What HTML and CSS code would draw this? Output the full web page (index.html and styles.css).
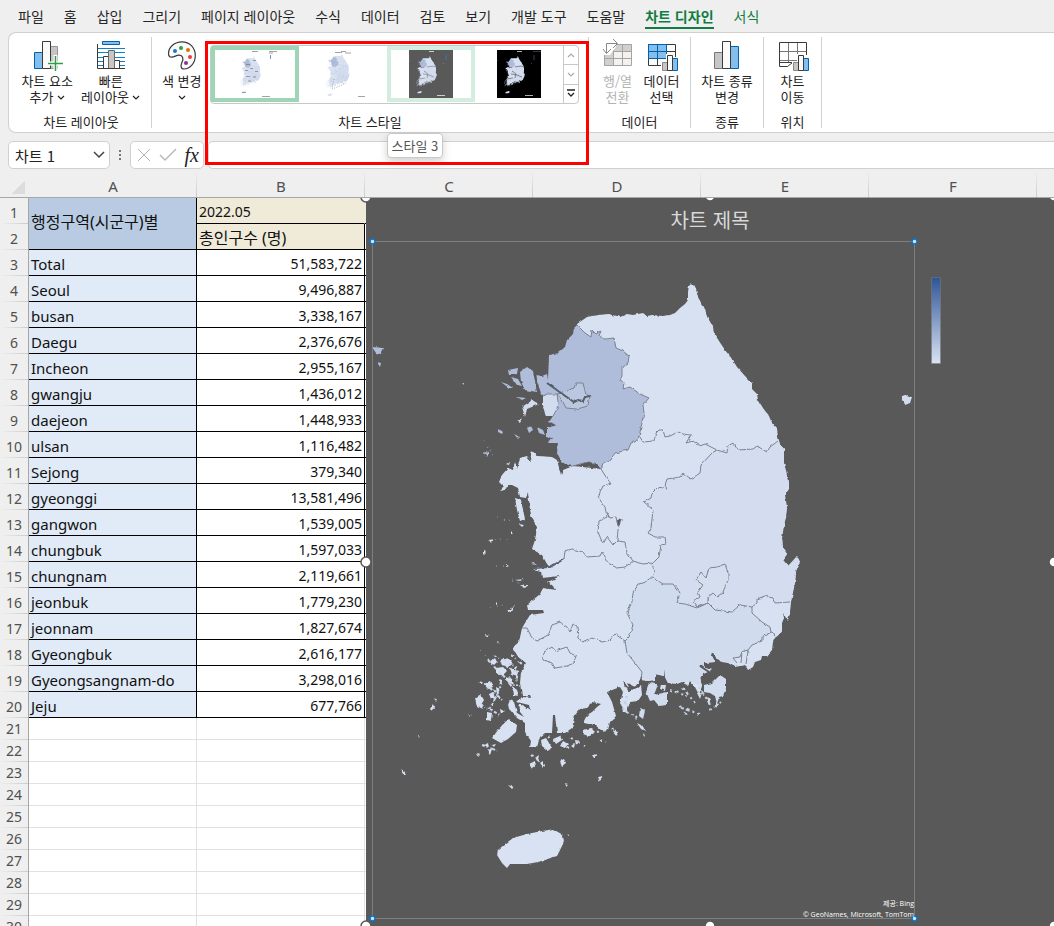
FILE: index.html
```html
<!DOCTYPE html>
<html lang="ko">
<head>
    <meta charset="UTF-8">
    <meta name="viewport" content="width=device-width, initial-scale=1.0">
    <title>차트 디자인</title>
    <link rel="stylesheet" href="styles.css">
</head>
<body>
    <!-- shared drawings -->
    <svg class="defs" width="0" height="0" aria-hidden="true">
        <defs>
            <filter id="rough" x="0" y="0" width="1" height="1" color-interpolation-filters="sRGB">
                <feTurbulence type="fractalNoise" baseFrequency="0.2" numOctaves="2" seed="4" result="noise"/>
                <feDisplacementMap in="SourceGraphic" in2="noise" scale="3" xChannelSelector="R" yChannelSelector="G"/>
            </filter>
            <symbol id="down" viewBox="0 0 8 5"><path d="M1 1l3 3 3-3" fill="none" stroke="currentColor" stroke-width="1.2"/></symbol>
            <symbol id="map" viewBox="366 198 688 728">
                <!-- mainland -->
                <path fill="#d8e1f2" d="M577 324L587 317 592 316 598 315 609 314 617 316 620 317 627 314 633 315 643 313 647 316 652 315 663 316 670 315 675 313 680 308 685 304 688 300 688 292 689 285 691 283 696 288 697 295 700 301 704 307 708 318 713 327 714 333 719 341 725 350 732 359 737 367 745 376 752 383 752 389 757 394 758 400 763 408 769 416 771 421 777 428 778 437 780 444 784 449 784 463 785 472 789 482 789 489 785 495 784 500 787 507 786 518 783 527 782 538 783 548 787 554 783 560 788 566 793 562 797 556 800 562 796 571 795 583 792 597 791 602 790 613 788 621 786 618 783 613 784 618 782 623 782 630 781 633 775 638 773 642 772 650 767 656 762 656 761 660 755 662 753 667 748 670 745 665 735 667 728 663 722 662 717 660 713 651 711 654 715 662 703 663 705 668 712 670 703 674 700 678 702 686 699 695 695 687 690 681 688 685 682 682 677 684 668 683 665 677 666 667 663 668 664 676 655 674 655 680 648 681 640 680 635 687 627 683 630 690 641 685 642 695 638 701 630 702 627 711 624 711 620 703 623 692 620 687 607 692 612 702 616 716 610 722 608 730 601 730 595 725 583 723 587 715 592 712 597 707 601 704 593 702 587 708 580 709 575 715 572 728 565 733 557 733 555 715 553 715 552 733 545 733 540 737 537 747 530 747 531 741 525 732 525 723 517 718 510 710 508 705 510 700 514 702 517 713 524 717 520 712 518 705 522 705 530 710 529 705 517 702 522 697 531 698 530 696 522 696 520 683 521 672 526 663 518 657 512 648 519 642 522 628 525 623 530 615 544 613 543 610 528 610 527 605 533 600 540 594 543 588 555 590 553 586 548 582 560 576 542 578 541 571 533 569 550 567 547 564 542 555 532 549 535 540 537 527 532 518 530 510 528 492 526 498 520 497 518 488 512 485 508 485 505 490 500 491 504 487 499 482 502 475 508 468 513 470 515 462 517 469 520 458 527 456 532 462 530 453 532 451 538 456 552 457 557 460 561 475 563 470 573 466 601 469z"/>
                <!-- Gyeonggi -->
                <path fill="#afbddb" d="M577 325L585 333 591 337 592 330 596 334 601 331 599 336 605 339 614 338 616 348 623 351 629 356 628 363 622 367 622 376 620 380 624 382 623 389 630 387 640 394 649 398 643 405 644 413 642 422 639 437 635 442 631 443 628 450 615 453 610 460 603 463 601 469 595 463 587 462 573 466 567 465 562 462 557 453 558 443 548 443 552 438 547 437 547 428 557 425 549 422 553 416 546 416 542 405 543 397 538 390 536 375 542 376 547 374 548 380 549 355 558 353 565 347 567 340 573 334 574 328z"/>
                <path fill="#d2dcee" d="M542 396L547 394 557 394 558 402 557 409 553 416 546 416 542 405z"/>
                <!-- Gyeongbuk -->
                <path fill="#d3ddef" d="M717 450L727 453 728 446 733 443 738 450 753 449 757 446 767 452 770 447 778 441 784 449 784 463 789 482 785 495 787 507 782 538 783 548 787 554 783 560 788 566 797 556 800 562 796 571 795 583 790 602 775 603 773 598 765 596 757 599 757 603 752 607 740 605 732 612 715 610 708 603 697 608 685 604 677 603 680 593 673 584 663 584 652 577 654 572 652 564 659 557 661 545 666 544 665 537 655 537 648 533 651 528 653 510 644 502 651 498 652 493 658 487 667 489 665 485 667 479 680 477 683 473 691 479 700 473 701 465 712 453z"/>
                <!-- Gyeongnam -->
                <path fill="#d0dbee" d="M652 577L663 584 673 584 680 593 677 603 697 608 708 603 715 610 732 612 740 605 752 607 752 613 762 622 770 628 771 632 762 636 762 641 752 645 748 650 742 652 740 657 733 658 737 665 722 661 717 659 713 651 711 654 715 662 703 663 705 668 712 670 703 674 700 678 702 686 690 681 682 682 668 683 665 677 664 669 664 676 655 674 655 680 642 679 642 672 635 663 627 653 625 641 629 637 633 625 627 613 632 602 633 592 639 584z"/>
                <!-- region borders -->
                <g fill="none" stroke="#7b838f" stroke-width="1">
                    <path d="M577 325L585 333 591 337 592 330 596 334 601 331 599 336 605 339 614 338 616 348 623 351 629 356 628 363 622 367 622 376 620 380 624 382 623 389 630 387 640 394 649 398 643 405 644 413 642 422 639 437 635 442 631 443 628 450 615 453 610 460 603 463 601 469 595 463 587 462 573 466"/>
                    <path d="M640 437L643 442 654 441 656 433 659 430 663 430 665 437 670 436 678 432 683 434 691 435 686 443 693 441 700 446 705 444 717 450 727 453 728 446 733 443 738 450 753 449 757 446 767 452 770 447 778 441"/>
                    <path d="M717 450L712 453 701 465 700 473 691 479 683 473 680 477 667 479 665 485 667 489 658 487 652 493 651 498 644 502 653 510 651 528 648 533 655 537 665 537 666 544 661 545 659 557 652 564 654 572 652 577 663 584 673 584 680 593 677 603 685 604 697 608 708 603"/>
                    <path d="M708 597L708 603 715 610 732 612 740 605 752 607 757 603 757 599 765 596 773 598 775 603 790 602M752 607V613L762 622 770 627 771 632 774 633 775 638M771 632L767 635 762 636 762 641 752 645 748 650 742 652 740 657 733 658 737 663M748 650L746 664M742 652L741 663"/>
                    <path fill="#d5deef" d="M708 603L697 607 693 602 700 597 698 592 703 585 696 580 701 572 706 578 709 568 717 567 725 564 728 573 728 580 723 592 717 597 713 593 708 597z"/>
                    <path d="M652 577L645 582 639 584 633 592 632 602 627 613 633 625 629 637 625 641 627 653 635 663 642 672 641 679"/>
                    <path d="M601 469L606 477 611 484 603 486 598 497 605 507 607 517 599 521 598 532 603 544 607 537 613 545 617 541 618 530 621 519 618 527 616 517 610 518 607 513M617 541L625 542 627 553 633 561 643 564 652 563"/>
                    <path d="M550 567L564 559 565 551 572 549 583 552 587 557 600 556 602 552 608 563 617 568 625 567 633 561"/>
                    <path d="M522 628L527 628 532 638 537 641 548 635 552 625 560 622 567 627 570 632 573 624 577 626 578 638 583 642 592 638 602 642 610 640 615 634 625 641"/>
                    <path d="M543 660L544 652 552 647 555 651 567 647 570 653 576 656 574 663 567 666 555 668 552 663z"/>
                    <path fill="#bac7e1" d="M567 391L574 388 576 383 583 383 586 395 590 396 588 406 577 409 566 408 562 400 557 394 563 393"/>
                    <path d="M542 396L547 394 557 394 558 402 557 409 553 416"/>
                    <path stroke="#5a5e68" stroke-width="2" d="M547 383L561 393 574 402 578 400 583 401 585 397 590 396M532 568L550 567 564 559"/>
                    <path stroke="#595959" stroke-width="2" d="M618 520l1 6M620 519l-2 4"/>
                </g>
                <!-- channel between Ganghwa and Gimpo -->
                <path fill="none" stroke="#595959" stroke-width="2" d="M535 371L536 382 540 393"/>
                <!-- north-west islands -->
                <path fill="#afbddb" d="M520 372L527 367 533 371 537 392 525 390 521 382zM508 370L518 368 517 374 509 375zM511 377L518 379 522 386 517 385zM501 382l6 2 6 4-4 0zM527 428l4-2 2 4-4 3zM537 427l6 3 2 5-6-2zM498 428l5 4-1 2-4-2zM372 347l12 1-3 6-5-1zM377 362l4 1-1 4zM529 433l3 1M514 434l6 3-2 2zM517 397l9 1-4 2zM484 452l5 1-2 4zM463 383l2 0 0 2z"/>
                <path fill="#d2dcee" d="M522 407L532 400 539 404 527 409 525 417zM902 397l6-2 4 2-2 6-5 2zM517 421l5-2-2 4z"/>
                <!-- west coast islands -->
                <path fill="#d8e1f2" d="M515 498L521 500 525 519 520 521 517 510zM519 524l5 1-2 2zM489 540l5-1-3 4zM511 531l3 3-3 0zM484 551l2 1-2 2zM506 565l2 1-2 1zM515 580l9-1-4 2zM520 585l8 0-3 3zM496 602l2 2-2 1zM507 611l7-5-2 5-4 1zM506 464l4-2-1 3zM531 564l3-1 3 2z"/>
                <path fill="none" stroke="#99a3b3" stroke-dasharray="1 6 1 4" d="M484 440l9 16-4-12M488 541l20-3M497 518l16 3M512 580l15 6M496 566h12M490 608l17-4M480 650l12 12"/>
                <!-- south-west islands -->
                <path fill="#d8e1f2" d="M490 662l5-4 2 4-4 4zM500 661l8-3 5 5-6 3-5-1zM496 668l7-1 4 4-5 5-5-3zM510 668l8 3-1 5-5-2zM506 677l6 2 2 6-6-3zM484 684l6-3 3 6-5 2zM475 699l6-4 3 5-3 5 2 4-6-3zM489 694l4-2 2 6-4 1zM496 687l4 2-3 6zM512 686l5 4 2 6-5-1zM487 712l5 1-1 7-4-1zM500 709l4 2-3 3zM492 738L498 730 504 723 509 719 517 725 516 732 508 739 501 743zM494 747l-2-2 4-1zM484 745l4-2 1 5zM487 751l5-2-2 6zM476 753l4 1-2 2zM430 709l4-6 1 4-3 5zM434 698l3 2-1 2zM401 769l3 2 2 3-2 0zM418 735l2 1-1 2zM468 714l4 1-2 1zM485 634l4 1-3 2zM497 641l2 1-1 2z"/>
                <path fill="none" stroke="#cdd7e8" stroke-width="2" stroke-dasharray="3 2 1 3 5 2" d="M488 660l14 15-2 13M494 655l22 12-8 15M503 675l13 17M480 682l18 11-9 17M490 688l12 12M506 666l11 6 0 14M480 704l20 11M482 745l16 6M511 655l11 9"/>
                <!-- south islands -->
                <path fill="#d8e1f2" d="M541 740l5-2 6 10-5 2-5-4zM529 764l6-3 1 5-4 3zM535 758l4-3-1 5zM540 763l3-2 0 6zM560 761l4-2 2 4-4 3zM553 739l7-3 2 4-6 4zM563 741l5 3-3 4-5-2zM571 746l4-3-1 5zM575 740l5 3-4 2zM583 730l8-2 4 4-7 4-5-2zM592 755l5-1-3 4zM598 777l5-1-3 5zM565 783l3 1-2 2zM508 785l6 2-2 2zM612 730l6 2-1 4zM568 834l1 2-2 0z"/>
                <path fill="none" stroke="#cdd7e8" stroke-width="2" stroke-dasharray="2 4 4 5" d="M532 755l14 12M548 737l21 11M571 738l14 8M597 732l20-4M600 740l6 2"/>
                <path fill="#d1dcee" d="M648 685l5-4 4 6-3 8 13-3 0 13-8 1-5-6-4 1-4-9zM661 684l5 1-1 6-5-2zM640 709l5 2-2 8-4-3zM637 723l6 3 2 5-4-2zM704 685l8-2 8-8 6 4 0 9-3 8-4 1-2 7-2-8-5-3-6-1zM697 693l5 0-2 6zM706 697l5 2-3 4zM683 711l5 3-2 1zM678 705l4 1-2 2zM716 702l3 2-3 4zM644 733l1 4-2-2z"/>
                <path fill="none" stroke="#c5d0e2" stroke-width="2" stroke-dasharray="2 3 4 3" d="M683 688l12 15M699 687l11 17M670 690l17 6M681 708l19 6M627 696l-4 14 14 8M710 710l11-8"/>
                <!-- inlets on the south coast -->
                <path fill="none" stroke="#595959" stroke-width="2" d="M623 682l6 8 10-4 3-9M657 676l4 8 7 0M700 666l9 6M681 686l8 0M514 652l6 10"/>
                <path fill="#d9e2f3" d="M497 855L498 850 505 844 513 838 527 834 542 831 553 829 563 835 564 842 557 856 538 862 527 864 510 864 507 868 502 863z"/>
            </symbol>
        </defs>
    </svg>

    <nav class="tabs">
        <a href="#">파일</a>
        <a href="#">홈</a>
        <a href="#">삽입</a>
        <a href="#">그리기</a>
        <a href="#">페이지 레이아웃</a>
        <a href="#">수식</a>
        <a href="#">데이터</a>
        <a href="#">검토</a>
        <a href="#">보기</a>
        <a href="#">개발 도구</a>
        <a href="#">도움말</a>
        <a href="#" class="active">차트 디자인</a>
        <a href="#" class="context">서식</a>
    </nav>

    <div class="ribbon">
        <div class="group group-layout">
            <div class="tools">
                <button class="tool">
                    <svg class="icon" viewBox="0 0 30 30"><path fill="#83beec" stroke="#0063b1" d="M2.500 11.500h8v16h-8z"/><path fill="#c8c6c4" stroke="#979593" d="M18.500 5.500h7v22h-7z"/><path fill="#fafafa" stroke="#3b3a39" d="M10.500.500h8v27h-8z"/><path stroke="#fff" stroke-width="4" d="M23.500 14v15M16 22.500h15"/><path stroke="#2f9e44" stroke-width="1.500" d="M23.500 15v15M16 22.500h15"/></svg>
                    <span>차트 요소</span>
                    <span>추가 <svg class="down"><use href="#down"/></svg></span>
                </button>
                <button class="tool">
                    <svg class="icon" viewBox="0 0 30 30"><path stroke="#0f7fc9" d="M2 7.500h27M2 11.500h27M2 16.500h27M2 20.500h27M2 24.500h27"/><path fill="#83beec" stroke="#0063b1" d="M6.500.500h17v3h-17z"/><path fill="#fafafa" stroke="#3b3a39" d="M7.500 15.500h5v12h-5zM18.500 19.500h5v8h-5z"/><path fill="#c8c6c4" stroke="#6b6967" d="M12.500 9.500h6v18h-6z"/><path fill="none" stroke="#3b3a39" d="M1.500 3v24.500H29"/></svg>
                    <span>빠른</span>
                    <span>레이아웃 <svg class="down"><use href="#down"/></svg></span>
                </button>
            </div>
            <h2>차트 레이아웃</h2>
        </div>

        <div class="group group-style">
            <div class="tools">
                <button class="tool">
                    <svg class="icon" viewBox="0 0 30 30"><path fill="#fafafa" stroke="#3b3a39" stroke-width="1.200" d="M15 .8C7.500.8 1.500 6 1.500 12.500c0 2.500 1.300 3.700 3.200 3.700 3 0 4.500-2.200 7.300-2 4 .3 4.800 3.300 3 7-1.500 3.300-1.500 6.800 2 6.800 6 0 11.300-6 11.300-13.300C28.300 6.500 22.500.8 15 .8z"/><circle cx="8" cy="10" r="2" fill="#1979ca"/><circle cx="14" cy="7" r="2" fill="#2f9e44"/><circle cx="21" cy="9" r="2" fill="#e07000"/><circle cx="23" cy="16" r="2" fill="#e83b40"/><circle cx="19" cy="22" r="2" fill="#8c2fa0"/></svg>
                    <span>색 변경</span>
                    <span><svg class="down"><use href="#down"/></svg></span>
                </button>
                <div class="gallery">
                    <button class="style selected" aria-label="스타일 1"><svg class="thumb" viewBox="0 0 44 48"><use href="#map" width="44" height="48"/><path stroke="#666" stroke-width=".6" d="M19 1.500h6M36 1.500h8M36 3h4M29 46.500h8M13 14.500h4M20 10.500h3M12 20.500h3M17 18.500h3M22 21.500h3M13 26.500h4M15 31h3M20 27h3M9 42.500h4"/><path stroke="#7d96c7" d="M37.500 5v4"/></svg></button>
                    <button class="style" aria-label="스타일 2"><svg class="thumb" viewBox="0 0 44 48"><use href="#map" x="-3" y="-3" width="50" height="54"/><path stroke="#666" stroke-width=".6" d="M14 2.500h7M20 1.500h5M24 3h6M37 46.500h7"/><path fill="none" stroke="#999" stroke-width=".8" stroke-dasharray="1 1.500" d="M13 29l-2 10 8-3 6-3"/></svg></button>
                    <button class="style hover" aria-label="스타일 3"><svg class="thumb gray" viewBox="0 0 44 48"><use href="#map" width="44" height="48"/><path fill="none" stroke="#666" stroke-width=".5" d="M18 17l6-1 3 1M15 21l4 3-1 4M14 24l6 1 5 2M10 29l6-1"/><path stroke="#eee" stroke-width=".8" d="M20 1.500h5M28 45.500h8"/><path stroke="#4d71b2" d="M37 5v5"/></svg><span class="tooltip">스타일 3</span></button>
                    <button class="style" aria-label="스타일 4"><svg class="thumb black" viewBox="0 0 44 48"><use href="#map" width="44" height="48"/><path fill="none" stroke="#333" stroke-width=".5" d="M18 17l6-1 3 1M15 21l4 3-1 4M14 24l6 1 5 2M10 29l6-1"/><path stroke="#ddd" stroke-width=".8" d="M20 1.500h5M28 45.500h8"/><path stroke="#444" stroke-width=".8" d="M36 1.500h8"/><path stroke="#29406f" d="M37 5v5"/></svg></button>
                    <div class="scroll">
                        <button aria-label="위로" disabled><svg class="down up"><use href="#down"/></svg></button>
                        <button aria-label="아래로" disabled><svg class="down"><use href="#down"/></svg></button>
                        <button aria-label="자세히"><svg width="8" height="9" viewBox="0 0 8 9"><path d="M0 1h8M1 4l3 3 3-3" fill="none" stroke="#222" stroke-width="1.300"/></svg></button>
                    </div>
                </div>
            </div>
            <h2>차트 스타일</h2>
            <div class="mark"></div>
        </div>

        <div class="group group-data">
            <div class="tools">
                <button class="tool" disabled>
                    <svg class="icon" viewBox="0 0 30 30"><path fill="#f3f2f1" stroke="#a6a4a2" d="M1.500 3.500h27v21h-27z"/><path fill="#d2d0ce" stroke="#a6a4a2" d="M10.500 3.500h18v7h-18zM1.500 10.500h9v14h-9z"/><path fill="none" stroke="#a6a4a2" d="M1 17.500h27M10.500 4v21M19.500 4v21"/><path fill="#fff" d="M0-2h13v8L7 14H0z"/><path fill="none" stroke="#8a8886" d="M3.500 12V2.500H14M0 8l3.500 4.500L8 8M10-2l4.500 4.500L10 7"/></svg>
                    <span>행/열</span>
                    <span>전환</span>
                </button>
                <button class="tool">
                    <svg class="icon" viewBox="0 0 30 30"><path fill="#fafafa" stroke="#3b3a39" d="M1.500 3.500h27v21h-27zM2 17.500h27M10.500 17v7M19.500 3v21M19 10.500h9"/><path fill="#83beec" stroke="#0063b1" d="M1.500 3.500h18v14h-18zM1 10.500h18M10.500 3v14"/><path fill="#fff" d="M14 19h5v-6h7v3h5v14H14z"/><path fill="#c8c6c4" stroke="#8a8886" d="M15.500 21.500h5v8h-5z"/><path fill="#83beec" stroke="#0063b1" d="M25.500 17.500h5v12h-5z"/><path fill="#fafafa" stroke="#3b3a39" d="M20.500 14.500h5v15h-5z"/></svg>
                    <span>데이터</span>
                    <span>선택</span>
                </button>
            </div>
            <h2>데이터</h2>
        </div>

        <div class="group group-type">
            <div class="tools">
                <button class="tool">
                    <svg class="icon" viewBox="0 0 30 30"><path fill="#c8c6c4" stroke="#797775" d="M2.500 11.500h8v16h-8z"/><path fill="#83beec" stroke="#0063b1" d="M18.500 5.500h8v22h-8z"/><path fill="#fafafa" stroke="#3b3a39" d="M10.500.500h8v27h-8z"/></svg>
                    <span>차트 종류</span>
                    <span>변경</span>
                </button>
            </div>
            <h2>종류</h2>
        </div>

        <div class="group group-place">
            <div class="tools">
                <button class="tool">
                    <svg class="icon" viewBox="0 0 30 30"><path fill="#fafafa" stroke="#797775" d="M1.500 10.500h27M1.500 19.500h27M10.500 1v20M19.500 1v20"/><path fill="none" stroke="#3b3a39" d="M28.500 14V1.500h-27v24h8l5-4h-13"/><path fill="#fff" d="M14 20h5v-7h7v3h5v14H14z"/><path fill="#c8c6c4" stroke="#8a8886" d="M15.500 21.500h5v8h-5z"/><path fill="#83beec" stroke="#0063b1" d="M25.500 17.500h5v12h-5z"/><path fill="#fafafa" stroke="#3b3a39" d="M20.500 14.500h5v15h-5z"/></svg>
                    <span>차트</span>
                    <span>이동</span>
                </button>
            </div>
            <h2>위치</h2>
        </div>
    </div>

    <div class="formula-bar">
        <div class="name-box">
            <input type="text" value="차트 1" aria-label="이름 상자">
            <button aria-label="이름 목록"><svg width="12" height="8" viewBox="0 0 12 8"><path d="M1 1l5 5 5-5" fill="none" stroke="#444" stroke-width="1.500"/></svg></button>
        </div>
        <svg class="dots" width="4" height="14" viewBox="0 0 4 14"><path fill="#777" d="M1 2h2v2H1zM1 6h2v2H1zM1 10h2v2H1z"/></svg>
        <div class="fx-box">
            <button aria-label="취소"><svg width="14" height="14" viewBox="0 0 14 14"><path d="M1 1l12 12M13 1L1 13" stroke="#b5b5b5"/></svg></button>
            <button aria-label="입력"><svg width="18" height="14" viewBox="0 0 18 14"><path d="M1 7l5 5L17 1" fill="none" stroke="#b5b5b5" stroke-width="1.300"/></svg></button>
            <button class="fx" aria-label="함수 삽입"><i>fx</i></button>
        </div>
        <input class="formula" type="text" aria-label="수식 입력줄">
    </div>

    <main class="sheet">
        <table>
            <colgroup><col class="col-head"><col><col><col><col><col><col><col></colgroup>
            <thead>
                <tr><th class="corner"></th><th>A</th><th>B</th><th>C</th><th>D</th><th>E</th><th>F</th><th></th></tr>
            </thead>
            <tbody class="data">
                <tr><th>1</th><td class="region" rowspan="2">행정구역(시군구)별</td><td class="period">2022.05</td><td colspan="5" class="first"></td></tr>
                <tr><th>2</th><td class="measure">총인구수 (명)</td><td colspan="5"></td></tr>
                <tr><th>3</th><td>Total</td><td>51,583,722</td><td colspan="5"></td></tr>
                <tr><th>4</th><td>Seoul</td><td>9,496,887</td><td colspan="5"></td></tr>
                <tr><th>5</th><td>busan</td><td>3,338,167</td><td colspan="5"></td></tr>
                <tr><th>6</th><td>Daegu</td><td>2,376,676</td><td colspan="5"></td></tr>
                <tr><th>7</th><td>Incheon</td><td>2,955,167</td><td colspan="5"></td></tr>
                <tr><th>8</th><td>gwangju</td><td>1,436,012</td><td colspan="5"></td></tr>
                <tr><th>9</th><td>daejeon</td><td>1,448,933</td><td colspan="5"></td></tr>
                <tr><th>10</th><td>ulsan</td><td>1,116,482</td><td colspan="5"></td></tr>
                <tr><th>11</th><td>Sejong</td><td>379,340</td><td colspan="5"></td></tr>
                <tr><th>12</th><td>gyeonggi</td><td>13,581,496</td><td colspan="5"></td></tr>
                <tr><th>13</th><td>gangwon</td><td>1,539,005</td><td colspan="5"></td></tr>
                <tr><th>14</th><td>chungbuk</td><td>1,597,033</td><td colspan="5"></td></tr>
                <tr><th>15</th><td>chungnam</td><td>2,119,661</td><td colspan="5"></td></tr>
                <tr><th>16</th><td>jeonbuk</td><td>1,779,230</td><td colspan="5"></td></tr>
                <tr><th>17</th><td>jeonnam</td><td>1,827,674</td><td colspan="5"></td></tr>
                <tr><th>18</th><td>Gyeongbuk</td><td>2,616,177</td><td colspan="5"></td></tr>
                <tr><th>19</th><td>Gyeongsangnam-do</td><td>3,298,016</td><td colspan="5"></td></tr>
                <tr><th>20</th><td>Jeju</td><td>677,766</td><td colspan="5"></td></tr>
            </tbody>
            <tbody class="blank">
                <tr><th>21</th><td></td><td></td><td colspan="5"></td></tr>
                <tr><th>22</th><td></td><td></td><td colspan="5"></td></tr>
                <tr><th>23</th><td></td><td></td><td colspan="5"></td></tr>
                <tr><th>24</th><td></td><td></td><td colspan="5"></td></tr>
                <tr><th>25</th><td></td><td></td><td colspan="5"></td></tr>
                <tr><th>26</th><td></td><td></td><td colspan="5"></td></tr>
                <tr><th>27</th><td></td><td></td><td colspan="5"></td></tr>
                <tr><th>28</th><td></td><td></td><td colspan="5"></td></tr>
                <tr><th>29</th><td></td><td></td><td colspan="5"></td></tr>
                <tr><th>30</th><td></td><td></td><td colspan="5"></td></tr>
            </tbody>
        </table>

        <!-- chart object floating over the cells -->
        <div class="objects">
            <section class="chart">
                <h1>차트 제목</h1>
                <svg class="plot" viewBox="0 0 688 728">
                    <defs>
                        <linearGradient id="scale" x2="0" y2="1"><stop stop-color="#2f5597"/><stop offset="1" stop-color="#dae3f3"/></linearGradient>
                    </defs>
                    <g filter="url(#rough)"><path fill="#595959" d="M0 40h680v670H0z"/><use href="#map" width="688" height="728"/></g>
                    <path fill="url(#scale)" stroke="#7f7f7f" stroke-width=".5" d="M565.500 79.500h9v86h-9z"/>
                    <path fill="none" stroke="#7f7f7f" d="M6.500 43.500h542v677h-542z"/>
                    <g fill="#cfe6f7" stroke="#1173c4" stroke-width="1.500"><circle cx="6.500" cy="43.500" r="2.500"/><circle cx="548.500" cy="43.500" r="2.500"/><circle cx="6.500" cy="720.500" r="2.500"/><circle cx="548.500" cy="720.500" r="2.500"/></g>
                    <g fill="#fff" stroke="#595959" stroke-width="1.500"><circle cx="0" cy="-1" r="5"/><circle cx="344" cy="-2" r="5"/><circle cx="688" cy="-2" r="5"/><circle cx="0" cy="364" r="5"/><circle cx="688" cy="364" r="5"/><circle cx="0" cy="728" r="5"/><circle cx="344" cy="728" r="5"/><circle cx="688" cy="728" r="5"/></g>
                </svg>
                <p class="credit">제공: Bing<br>© GeoNames, Microsoft, TomTom</p>
            </section>
        </div>
    </main>
</body>
</html>
```

FILE: styles.css
```css
* {
    margin: 0;
    padding: 0;
    box-sizing: border-box;
}

body {
    height: 100vh;
    overflow: hidden;
    display: flex;
    flex-direction: column;
    background: #efefef;
    color: #222;
    font-family: "Noto Sans CJK KR", "Noto Sans", sans-serif;
    font-size: 13px;
}

button,
input {
    font: inherit;
    color: inherit;
    border: none;
    background: none;
    outline: none;
}

.defs {
    position: absolute;
}

/* tabs */
.tabs {
    display: flex;
    gap: 20px;
    height: 32px;
    padding: 4px 18px 0;
    font-size: 14px;
    line-height: 24px;
    white-space: nowrap;
}

.tabs a {
    height: 25px;
    color: #262626;
    text-decoration: none;
}

.tabs .context,
.tabs .active {
    color: #107c41;
}

.tabs .active {
    font-weight: bold;
    border-bottom: 2px solid #107c41;
}

/* ribbon */
.ribbon {
    position: relative;
    z-index: 2;
    display: flex;
    flex-shrink: 0;
    height: 101px;
    margin-left: 8px;
    background: #fff;
    border: 1px solid #d0d0d0;
    border-right: none;
    border-radius: 8px 0 0 8px;
}

.group {
    position: relative;
    display: flex;
    flex-direction: column;
    justify-content: space-between;
    flex-shrink: 0;
    height: 91px;
    margin-top: 4px;
    padding-top: 4px;
    border-right: 1px solid #d0d0d0;
}

.group-layout { width: 143px; padding-left: 2px; }
.group-style { width: 437px; }
.group-data { width: 102px; }
.group-type { width: 73px; }
.group-place { width: 58px; }

.group h2 {
    font-size: 13px;
    font-weight: normal;
    line-height: 12px;
    text-align: center;
}

.tools {
    display: flex;
    justify-content: center;
    align-items: flex-start;
}

.group-style .tools {
    justify-content: flex-start;
    padding-left: 6px;
}

.tool {
    display: flex;
    flex-direction: column;
    align-items: center;
    min-width: 44px;
    padding: 0 4px;
    line-height: 16px;
    white-space: nowrap;
}

.tool:disabled {
    color: #b3b3b3;
}

.icon {
    width: 30px;
    height: 30px;
    margin-bottom: 2px;
    overflow: visible;
}

.down {
    width: 8px;
    height: 5px;
    vertical-align: 2px;
}

.up {
    transform: rotate(180deg);
}

/* style gallery */
.gallery {
    display: flex;
    height: 59px;
    margin: 4px 0 0 4px;
    border: 1px solid #c8c8c8;
    border-radius: 4px;
}

.style {
    position: relative;
    display: flex;
    justify-content: center;
    align-items: center;
    width: 88px;
    height: 56px;
    border: 4px solid transparent;
}

.style.selected { border-color: #9fd5b7; }
.style.hover { border-color: #d3eee0; }

.thumb {
    width: 44px;
    height: 48px;
}

.thumb.gray { background: #595959; }
.thumb.black { background: #000; }

.scroll {
    display: flex;
    flex-direction: column;
    width: 15px;
    border-left: 1px solid #c8c8c8;
}

.scroll button {
    display: flex;
    justify-content: center;
    align-items: center;
    flex: 1;
}

.scroll button + button {
    border-top: 1px solid #c8c8c8;
}

.scroll button:disabled {
    color: #aaa;
}

.tooltip {
    position: absolute;
    left: -4px;
    top: 83px;
    padding: 0 4px;
    background: #fff;
    border: 1px solid #c8c8c8;
    border-radius: 4px;
    box-shadow: 0 4px 8px rgba(0, 0, 0, 0.18);
    color: #555;
    line-height: 23px;
    white-space: nowrap;
}

/* red highlight round the style group */
.mark {
    position: absolute;
    left: 53px;
    top: 4px;
    width: 384px;
    height: 124px;
    border: 3px solid #f00;
    pointer-events: none;
}

/* formula bar */
.formula-bar {
    display: flex;
    align-items: center;
    flex-shrink: 0;
    height: 28px;
    margin: 8px 0 1px 8px;
}

.name-box,
.fx-box,
.formula {
    height: 28px;
    background: #fff;
    border: 1px solid #d0d0d0;
    border-radius: 5px;
}

.name-box {
    display: flex;
    align-items: center;
    width: 102px;
    padding: 0 4px 0 6px;
    font-size: 15px;
}

.name-box input {
    flex: 1;
    min-width: 0;
    height: 24px;
}

.name-box button {
    display: flex;
}

.dots {
    margin: 0 8px;
}

.fx-box {
    display: flex;
    justify-content: space-between;
    align-items: center;
    width: 74px;
    padding: 0 4px 0 6px;
}

.fx-box button {
    display: flex;
}

.fx-box .fx {
    font: 20px/20px "Liberation Serif", serif;
}

.formula {
    flex: 1;
    margin-left: 4px;
    padding: 0 8px;
    border-right: none;
    border-radius: 5px 0 0 5px;
}

/* sheet */
.sheet {
    position: relative;
    flex: 1;
    overflow: hidden;
    background: #fff;
    font-family: "Noto Sans", "Noto Sans CJK KR", sans-serif;
    font-size: 15px;
}

table {
    table-layout: fixed;
    width: 1205px;
    border-collapse: separate;
    border-spacing: 0;
    line-height: 20px;
}

col { width: 168px; }
.col-head { width: 29px; }

th {
    background: #efefef;
    color: #505050;
    font-size: 14px;
    font-weight: normal;
}

thead th {
    height: 28px;
    padding-top: 5px;
    border-bottom: 1px solid #a6a6a6;
    background: linear-gradient(#efefef, #ccc) right / 1px 100% no-repeat #efefef;
    font-size: 15px;
}

thead .corner {
    background: linear-gradient(135deg, transparent 50%, #dcdcdc 50%) 11px 10px / 14px 14px no-repeat #efefef;
}

tbody th {
    border-right: 1px solid #a6a6a6;
    background: linear-gradient(90deg, #efefef, #ccc) bottom / 100% 1px no-repeat #efefef;
}

td {
    padding: 0 2px;
    color: #111;
}

.data tr { height: 26px; }
.blank tr { height: 22px; }

.data th {
    padding-top: 3px;
}

.data td {
    height: 26px;
    padding-top: 2px;
    border-right: 1px solid #000;
    border-bottom: 1px solid #000;
}

.data td:nth-child(2) {
    background: #e1ebf7;
}

.data td:nth-child(3) {
    font-size: 14px;
    text-align: right;
}

.data td.region {
    padding: 0 2px 4px;
    background: #b9cbe2;
    font-size: 16px;
}

.data td.period,
.data td.measure {
    background: #f0ead8;
    text-align: left;
}

.data td.period {
    border-right-color: #f0ead8;
    font-size: 14px;
}

.data td.measure {
    font-size: 16px;
}

.data td.first {
    background: #f0ead8;
}

.blank td {
    border-right: 1px solid #e1e1e1;
    border-bottom: 1px solid #e1e1e1;
}

/* chart */
.objects {
    position: absolute;
    left: 29px;
    top: 28px;
    right: 0;
    bottom: 0;
    overflow: hidden;
}

.chart {
    position: absolute;
    left: 337px;
    top: 0;
    width: 688px;
    height: 728px;
    background: #595959;
    color: #d9d9d9;
}

.chart h1 {
    padding-top: 8px;
    font-family: "Noto Sans CJK KR", sans-serif;
    font-size: 20px;
    font-weight: normal;
    line-height: 28px;
    text-align: center;
}

.plot {
    position: absolute;
    left: 0;
    top: 0;
    width: 688px;
    height: 728px;
    overflow: visible;
}

.credit {
    position: absolute;
    right: 140px;
    bottom: 6px;
    color: #fff;
    font-family: "Open Sans", "Noto Sans CJK KR", sans-serif;
    font-size: 7px;
    line-height: 11px;
    text-align: right;
}
```
